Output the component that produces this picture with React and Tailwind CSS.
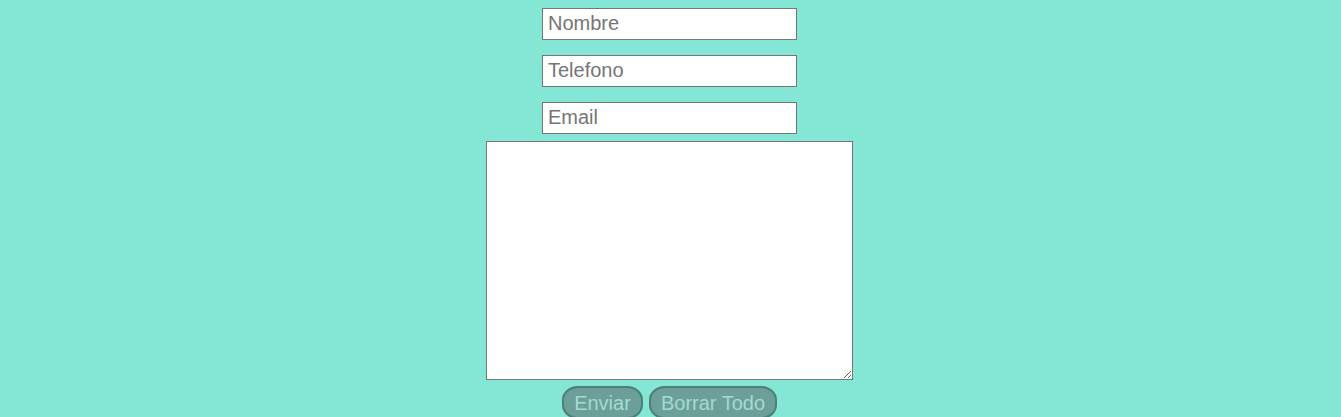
import React from "react";

export default function App() {
  const inputCls =
    "w-[255px] h-[32px] border border-[#767676] bg-white px-[5px] pb-[1px] text-[20px] text-black placeholder:text-[#757575] outline-none";

  return (
    <div className="min-h-[417px] w-full bg-[#84e7d5] font-['Liberation_Sans',Arial,sans-serif]">
      <form className="flex flex-col items-center pt-[8px] pr-[2px]">
        <input type="text" placeholder="Nombre" className={inputCls} />
        <input type="text" placeholder="Telefono" className={`${inputCls} mt-[15px]`} />
        <input type="email" placeholder="Email" className={`${inputCls} mt-[15px]`} />
        <textarea className="mt-[7px] w-[367px] h-[239px] border border-[#767676] bg-white outline-none" />
        <div className="mt-[6px] flex gap-[6px]">
          <button
            type="button"
            className="h-[33px] w-[81px] rounded-[16px/14px] border-2 border-[#4b7f77] bg-[#6b9f97] pb-[1px] text-[20px] text-[#a3dbcf]"
          >
            Enviar
          </button>
          <button
            type="reset"
            className="h-[33px] w-[128px] rounded-[16px/14px] border-2 border-[#4b7f77] bg-[#6b9f97] pb-[1px] text-[20px] text-[#a3dbcf]"
          >
            Borrar Todo
          </button>
        </div>
      </form>
    </div>
  );
}
